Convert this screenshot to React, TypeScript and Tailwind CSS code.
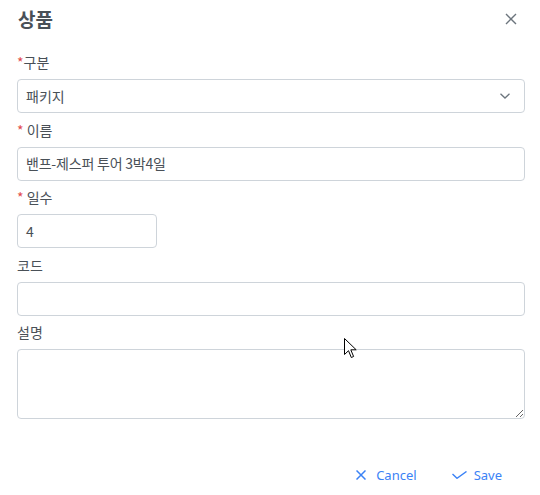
import React from "react";

const Label = ({ text, req, space }: { text: string; req?: boolean; space?: boolean }) => (
  <label className="block h-[21px] leading-[21px] mb-[6px]">
    {req && <span className="text-[#e24c4c]">*</span>}
    {req && space && " "}
    {text}
  </label>
);

export default function App() {
  return (
    <div className="relative w-[540px] h-[495px] bg-white text-[#495057] text-[14px] font-['Noto_Sans','Noto_Sans_CJK_KR',sans-serif] overflow-hidden">
      <div className="flex h-[36px] items-center justify-between pl-[18px] pr-[23px] pt-[2px]">
        <h1 className="text-[19px] leading-[24px] font-bold font-['Noto_Sans_CJK_KR',sans-serif] text-[#495057]">상품</h1>
        <button className="text-[#6c757d]">
          <svg width="12" height="12" viewBox="0 0 12 12" fill="none" stroke="currentColor" strokeWidth="1.4">
            <path d="M1 1L11 11M11 1L1 11" />
          </svg>
        </button>
      </div>
      <div className="pl-[17px] pr-[15px] pt-[16px] font-['Noto_Sans_CJK_KR',sans-serif]">
        <div className="mb-[6.6px]">
          <Label text="구분" req />
          <div className="flex h-[34px] items-center justify-between rounded-[4px] border border-[#ced4da] pl-[8px] pr-[14px]">
            <span>패키지</span>
            <svg width="10" height="6" viewBox="0 0 10 6" fill="none" stroke="#6c757d" strokeWidth="1.3">
              <path d="M0.5 0.8L5 5L9.5 0.8" />
            </svg>
          </div>
        </div>
        <div className="mb-[6.6px]">
          <Label text="이름" req space />
          <div className="flex h-[34px] items-center rounded-[4px] border border-[#ced4da] pl-[8px]">
            <span className="tracking-[-0.2px]">밴프-제스퍼 투어 3박4일</span>
          </div>
        </div>
        <div className="mb-[6.6px]">
          <Label text="일수" req space />
          <div className="flex h-[34px] w-[140px] items-center rounded-[4px] border border-[#ced4da] pl-[8px]">
            <span>4</span>
          </div>
        </div>
        <div className="mb-[6.6px]">
          <Label text="코드" />
          <div className="h-[34px] rounded-[4px] border border-[#ced4da]" />
        </div>
        <div className="mb-[6.4px]">
          <Label text="설명" />
          <textarea className="block h-[70px] w-full resize-y rounded-[4px] border border-[#ced4da] outline-none" />
        </div>
      </div>
      <div className="mt-[36px] flex h-[40px] items-center justify-end pr-[38px] text-[#3b82f6] font-['Noto_Sans',sans-serif] text-[13px]">
        <button className="flex items-center gap-[10px]">
          <svg width="10" height="10" viewBox="0 0 10 10" fill="none" stroke="currentColor" strokeWidth="1.5">
            <path d="M0.5 0.5L9.5 9.5M9.5 0.5L0.5 9.5" />
          </svg>
          <span>Cancel</span>
        </button>
        <button className="ml-[35px] flex items-center gap-[7px]">
          <svg width="15" height="8" viewBox="0 0 15 8" fill="none" stroke="currentColor" strokeWidth="1.4">
            <path d="M0.5 3L5 7.3L14.5 0.5" />
          </svg>
          <span>Save</span>
        </button>
      </div>
      <svg className="absolute left-[344px] top-[338px]" width="13" height="21" viewBox="0 0 13 21">
        <path d="M0.5 0.5V16.5L4.5 12.7L7.3 19.5L9.6 18.5L6.8 11.8H12.2Z" fill="white" stroke="black" strokeWidth="1" strokeLinejoin="miter" />
      </svg>
    </div>
  );
}
